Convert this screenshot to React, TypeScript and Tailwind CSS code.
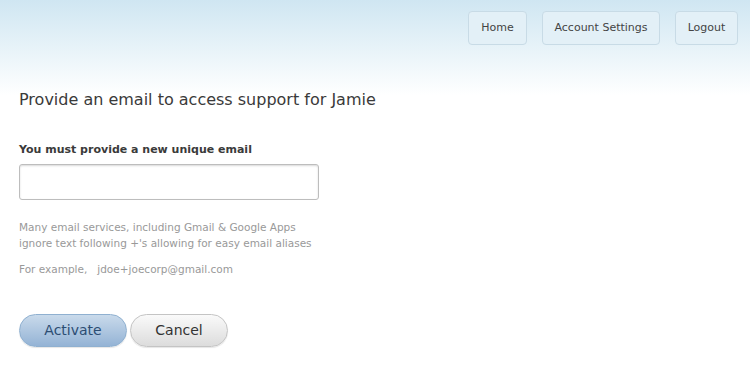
import React from "react";

export default function App() {
  const font = { fontFamily: '"DejaVu Sans", Verdana, sans-serif' };
  return (
    <div
      className="w-[750px] h-[370px] bg-[linear-gradient(to_bottom,#cfe6f2_0px,#e6f2f8_45px,#ffffff_95px)] text-[#333]"
      style={font}
    >
      <div className="flex justify-end gap-[15px] pt-[11px] pr-[12px]">
        <button className="h-[34px] w-[59px] rounded-[4px] border border-[#c8dbe6] bg-[#e3f0f7] text-[11px] text-[#444]">Home</button>
        <button className="h-[34px] w-[118px] rounded-[4px] border border-[#c8dbe6] bg-[#e3f0f7] text-[11px] text-[#444]">Account Settings</button>
        <button className="h-[34px] w-[63px] rounded-[4px] border border-[#c8dbe6] bg-[#e3f0f7] text-[11px] text-[#444]">Logout</button>
      </div>
      <div className="px-[19px]">
        <h1 className="mt-[44px] text-[16px] leading-[22px] text-[#3a3a3a]">Provide an email to access support for Jamie</h1>
        <label className="block mt-[32px] text-[11px] font-bold text-[#3a3a3a] leading-[14px]">You must provide a new unique email</label>
        <input className="block mt-[7px] w-[300px] h-[36px] rounded-[3px] border border-[#bdbdbd] shadow-[inset_0_1px_2px_rgba(0,0,0,0.15)] bg-white outline-none" />
        <p className="mt-[19px] text-[10.5px] leading-[16px] text-[#999]">
          Many email services, including Gmail &amp; Google Apps<br />
          ignore text following +'s allowing for easy email aliases
        </p>
        <p className="mt-[10px] text-[10.5px] leading-[16px] text-[#999] whitespace-pre">For example,   jdoe+joecorp@gmail.com</p>
        <div className="flex gap-[3px] mt-[37px]">
          <button className="w-[108px] h-[33px] rounded-full border border-[#8fb0d0] bg-[linear-gradient(to_bottom,#c9daeb,#94b3d5)] text-[14px] text-[#2c4d73] shadow-[0_1px_1px_rgba(0,0,0,0.1)]">Activate</button>
          <button className="w-[98px] h-[33px] rounded-full border border-[#c4c4c4] bg-[linear-gradient(to_bottom,#fafafa,#dcdcdc)] text-[14px] text-[#333] shadow-[0_1px_1px_rgba(0,0,0,0.1)]">Cancel</button>
        </div>
      </div>
    </div>
  );
}
